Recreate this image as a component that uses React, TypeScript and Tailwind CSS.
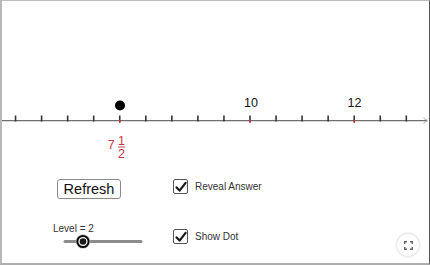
import React from "react";

const ticks: number[] = [];
for (let v = 5.5; v <= 13.001; v += 0.5) ticks.push(v);
const X = (v: number) => 250 + (v - 10) * 52.1;
const RED = "#cc3344";

function Check() {
  return (
    <div className="w-[15px] h-[15px] border-[1.5px] border-[#555] rounded-[2px] bg-white flex items-center justify-center">
      <svg width="12" height="12" viewBox="0 0 12 12">
        <path d="M1.6 6.4 L4.6 9.6 L10.6 1.8" fill="none" stroke="#1a1a1a" strokeWidth="2.2" strokeLinecap="round" strokeLinejoin="round" />
      </svg>
    </div>
  );
}

export default function App() {
  return (
    <div
      className="relative w-[430px] h-[265px] bg-white border-l-2 border-t border-r border-b-2 border-l-[#b8b8b8] border-t-[#bdbdbd] border-r-[#555] border-b-[#b0b0b0] overflow-hidden"
      style={{ fontFamily: '"Liberation Sans", Arial, sans-serif' }}
    >
      <svg width="427" height="169" viewBox="2 1 427 169" className="block">
        <line x1="2" y1="120.7" x2="427" y2="120.7" stroke="#6f6f6f" strokeWidth="1.3" />
        <path d="M423.5 118 L427.5 120.7 L423.5 123.4" fill="none" stroke="#aaa" strokeWidth="1" />
        {ticks.map((v) => (
          <line key={v} x1={X(v)} y1="115.5" x2={X(v)} y2="121.5" stroke="#333" strokeWidth="1.6" />
        ))}
        {[7.5, 10, 12].map((v) => (
          <line key={"r" + v} x1={X(v)} y1="120" x2={X(v)} y2="123" stroke={RED} strokeWidth="1.6" />
        ))}
        <circle cx="120" cy="105.5" r="5" fill="#000" />
        <text x="251" y="107.3" fontSize="12.5" textAnchor="middle" fill="#111">10</text>
        <text x="354.5" y="107.3" fontSize="12.5" textAnchor="middle" fill="#111">12</text>
        <text x="111.3" y="148.8" fontSize="12.5" textAnchor="middle" fill={RED}>7</text>
        <text x="121.5" y="144.5" fontSize="12.5" textAnchor="middle" fill={RED}>1</text>
        <line x1="118" y1="147" x2="125.2" y2="147" stroke={RED} strokeWidth="0.9" />
        <text x="121.6" y="158" fontSize="12.5" textAnchor="middle" fill={RED}>2</text>
      </svg>

      <div className="flex pt-[9px] pl-[51px]">
        <div className="w-[120px] flex flex-col">
          <button className="ml-[4px] w-[64px] h-[20px] border border-[#8a8a8a] rounded-[3px] bg-white text-[14.5px] leading-[18px] text-[#111] flex items-center justify-center">
            Refresh
          </button>
          <div className="mt-[25px] h-[10px] text-[10px] leading-[10px] text-[#333]">Level = 2</div>
          <div className="h-[15px] ml-[9px]">
            <svg width="82" height="15" viewBox="0 0 82 15">
              <line x1="3" y1="7.5" x2="79" y2="7.5" stroke="#8c8c8c" strokeWidth="3" strokeLinecap="round" />
              <circle cx="21" cy="7.5" r="7.4" fill="#d0d0d0" opacity="0.8" />
              <circle cx="21" cy="7.5" r="5.6" fill="#fff" stroke="#0a0a0a" strokeWidth="2" />
              <circle cx="21" cy="7.5" r="3.3" fill="#1a1a1a" />
            </svg>
          </div>
        </div>
        <div className="flex flex-col">
          <div className="flex items-center h-[15px] gap-[7px]">
            <Check />
            <span className="text-[10px] text-[#333]">Reveal Answer</span>
          </div>
          <div className="flex items-center h-[15px] gap-[7px] mt-[35px]">
            <Check />
            <span className="text-[10px] text-[#333]">Show Dot</span>
          </div>
        </div>
      </div>

      <div className="absolute right-[10px] bottom-[7px] w-[22px] h-[22px] rounded-full bg-white shadow-[0_0_3px_rgba(0,0,0,0.25)] flex items-center justify-center">
        <svg width="9" height="9" viewBox="0 0 9 9" fill="none" stroke="#666" strokeWidth="1.4">
          <path d="M0.7 3 V0.7 H3 M6 0.7 H8.3 V3 M8.3 6 V8.3 H6 M3 8.3 H0.7 V6" />
        </svg>
      </div>
    </div>
  );
}
